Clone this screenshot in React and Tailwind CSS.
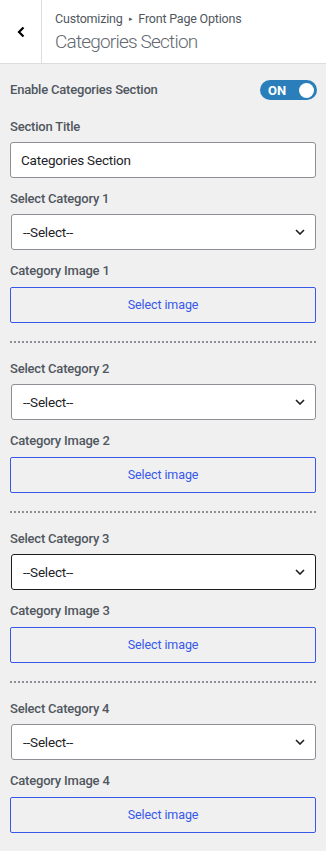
import React from "react";

const font = { fontFamily: 'Roboto, "Noto Sans", sans-serif' };

function Chevron() {
  return (
    <svg width="10" height="6" viewBox="0 0 10 6" fill="none">
      <path d="M1 1l4 4 4-4" stroke="#1e1e1e" strokeWidth="1.6" />
    </svg>
  );
}

function Section({ n, first, focused }) {
  return (
    <div className="flex flex-col">
      <div className={`${first ? "mt-[11px]" : "mt-[16px]"} h-[20px] leading-[20px] text-[13px] tracking-[-0.2px] font-medium text-[#50575e]`}>
        Select Category {n}
      </div>
      <div
        className={`mt-[5px] h-[36px] ml-[1px] bg-white rounded-[3px] border flex items-center justify-between pl-[11px] pr-[10px] ${
          focused ? "border-[#1e1e1e]" : "border-[#8c8f94]"
        }`}
      >
        <span className="text-[13.5px] tracking-[-0.2px] text-[#1d2327]">--Select--</span>
        <Chevron />
      </div>
      <div className="mt-[11px] h-[20px] leading-[20px] text-[13px] tracking-[-0.2px] font-medium text-[#50575e]">
        Category Image {n}
      </div>
      <div className="mt-[6px] h-[36px] rounded-[2px] border border-[#3858e9] flex items-center justify-center text-[12.5px] tracking-[-0.1px] text-[#3858e9]">
        Select image
      </div>
      <div className="mt-[18px] h-[2px] border-t-2 border-dotted border-[#8c8f94]" />
    </div>
  );
}

export default function App() {
  return (
    <div className="w-[326px] h-[851px] bg-[#f0f0f1] overflow-hidden" style={font}>
      <div className="h-[64px] bg-white border-b border-[#dcdcde] flex">
        <div className="w-[42px] border-r border-[#dcdcde] flex items-center justify-center">
          <svg width="8" height="12" viewBox="0 0 8 12" fill="none">
            <path d="M6.5 1.5L2 6l4.5 4.5" stroke="#000" strokeWidth="2.2" />
          </svg>
        </div>
        <div className="pl-[13px] flex flex-col pt-[9px]">
          <div className="text-[12.5px] tracking-[-0.2px] leading-[20px] text-[#50575e] flex items-center">
            Customizing <span className="mx-[6px] text-[7px]">▸</span> Front Page Options
          </div>
          <div className="text-[19px] tracking-[-0.8px] leading-[26px] font-light text-[#646970]">Categories Section</div>
        </div>
      </div>
      <div className="px-[10px] flex flex-col">
        <div className="mt-[16px] h-[20px] flex items-center justify-between">
          <span className="text-[13px] tracking-[-0.2px] font-medium text-[#50575e]">Enable Categories Section</span>
          <div className="w-[57px] h-[20px] mr-[-1px] rounded-full bg-[#2a7fba] flex items-center justify-between pl-[8px] pr-[3px]">
            <span className="text-[13px] font-bold text-white leading-none">ON</span>
            <span className="w-[15px] h-[15px] rounded-full bg-white" />
          </div>
        </div>
        <div className="mt-[17px] h-[20px] leading-[20px] text-[13px] tracking-[-0.2px] font-medium text-[#50575e]">Section Title</div>
        <div className="mt-[5px] h-[36px] bg-white rounded-[3px] border border-[#8c8f94] flex items-center pl-[10px]">
          <span className="text-[13.5px] tracking-[-0.2px] text-[#1d2327]">Categories Section</span>
        </div>
        <Section n={1} first />
        <Section n={2} />
        <Section n={3} focused />
        <Section n={4} />
      </div>
    </div>
  );
}
